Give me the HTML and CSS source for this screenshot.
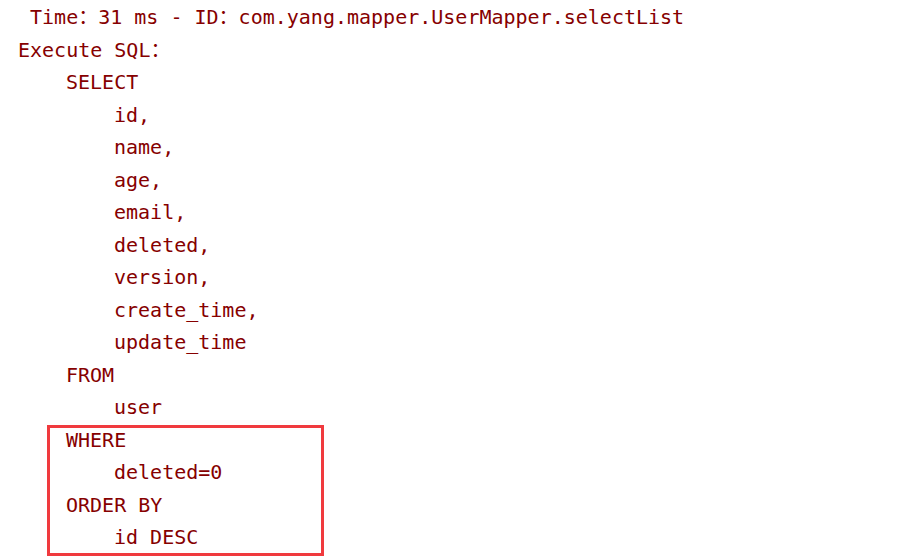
FILE: index.html
```html
<!DOCTYPE html>
<html lang="zh">
<head>
<meta charset="utf-8">
<title>Execute SQL</title>
<link rel="stylesheet" href="styles.css">
</head>
<body>
<div class="console">
  <div class="line"> Time：31 ms - ID：com.yang.mapper.UserMapper.selectList</div>
  <div class="line">Execute SQL：</div>
  <div class="line i1">SELECT</div>
  <div class="line i2">id,</div>
  <div class="line i2">name,</div>
  <div class="line i2">age,</div>
  <div class="line i2">email,</div>
  <div class="line i2">deleted,</div>
  <div class="line i2">version,</div>
  <div class="line i2">create_time,</div>
  <div class="line i2">update_time</div>
  <div class="line i1">FROM</div>
  <div class="line i2">user</div>
  <div class="hl">
    <div class="line i1">WHERE</div>
    <div class="line i2">deleted=0</div>
    <div class="line i1">ORDER BY</div>
    <div class="line i2">id DESC</div>
  </div>
</div>
</body>
</html>
```

FILE: styles.css
```css
html, body {
  margin: 0;
  padding: 0;
  background: #ffffff;
}

.console {
  padding: 1px 0 7px 18px;
  font-family: "DejaVu Sans Mono", "Noto Sans CJK SC", monospace;
  font-size: 20px;
  line-height: 32.5px;
  color: #860000;
}

.line {
  white-space: pre;
  height: 32.5px;
}

.i1 {
  padding-left: 48px;
}

.i2 {
  padding-left: 96px;
}

.hl {
  position: relative;
}

.hl::after {
  content: "";
  position: absolute;
  left: 29px;
  top: 1.5px;
  width: 271px;
  height: 125px;
  border: 3px solid #f03a3e;
}
```
